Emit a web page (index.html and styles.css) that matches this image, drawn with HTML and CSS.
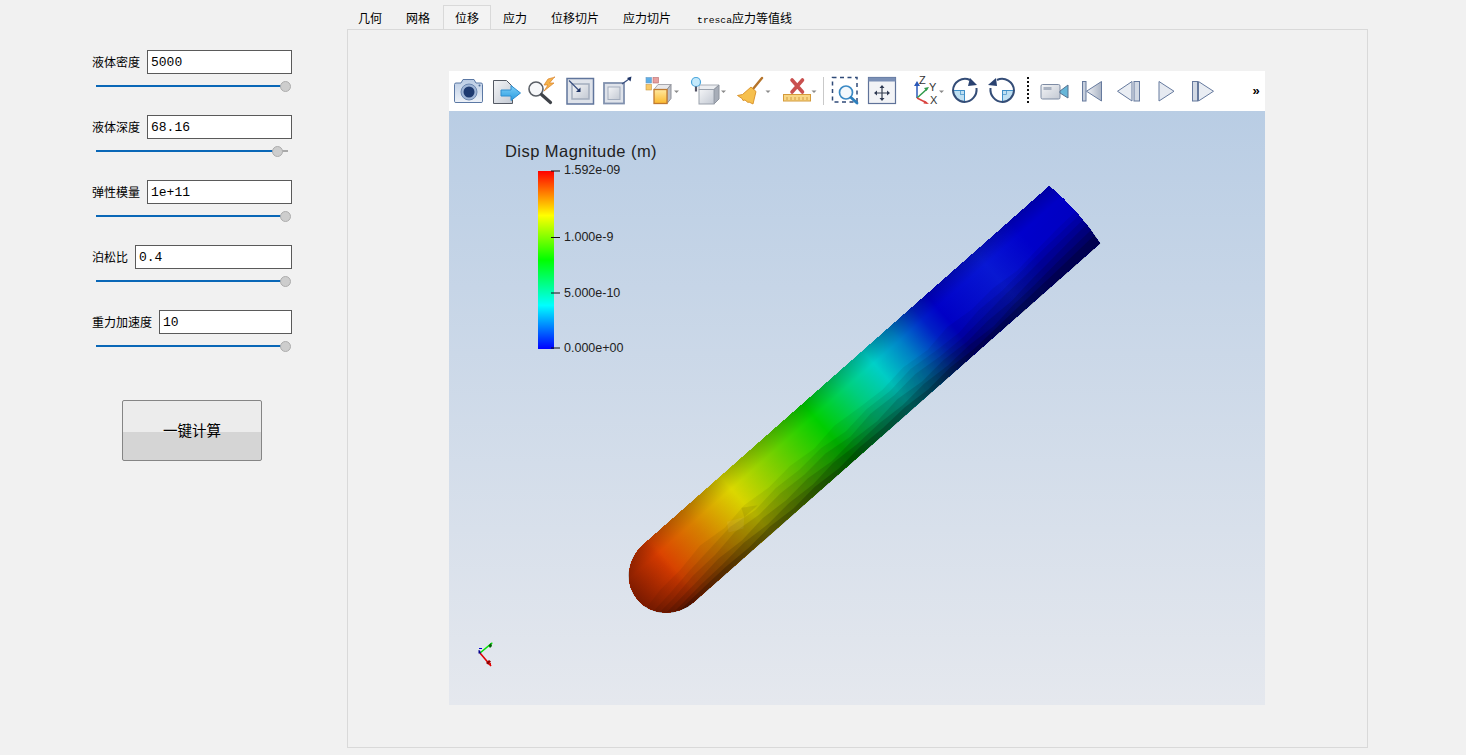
FILE: index.html
```html
<!DOCTYPE html>
<html lang="zh-CN">
<head>
<meta charset="utf-8">
<title>一键计算</title>
<link rel="stylesheet" href="styles.css">
</head>
<body>
<div class="app">
  <aside class="side">
    <div class="group">
      <div class="row"><label class="lbl">液体密度</label><div class="field">5000</div></div>
      <div class="slider"><div class="fill" style="width:189px"></div><div class="knob"></div></div>
    </div>
    <div class="group">
      <div class="row"><label class="lbl">液体深度</label><div class="field">68.16</div></div>
      <div class="slider"><div class="fill" style="width:181px"></div><div class="knob"></div></div>
    </div>
    <div class="group">
      <div class="row"><label class="lbl">弹性模量</label><div class="field">1e+11</div></div>
      <div class="slider"><div class="fill" style="width:189px"></div><div class="knob"></div></div>
    </div>
    <div class="group">
      <div class="row"><label class="lbl">泊松比</label><div class="field">0.4</div></div>
      <div class="slider"><div class="fill" style="width:189px"></div><div class="knob"></div></div>
    </div>
    <div class="group">
      <div class="row"><label class="lbl">重力加速度</label><div class="field">10</div></div>
      <div class="slider"><div class="fill" style="width:189px"></div><div class="knob"></div></div>
    </div>
    <button class="run"><span>一键计算</span></button>
  </aside>

  <main class="content">
    <nav class="tabs">
      <div class="tab">几何</div>
      <div class="tab">网格</div>
      <div class="tab active">位移</div>
      <div class="tab">应力</div>
      <div class="tab">位移切片</div>
      <div class="tab">应力切片</div>
      <div class="tab"><span class="mono">tresca</span>应力等值线</div>
    </nav>
    <section class="pane">
      <div class="viewer">
        <div class="toolbar">
          <svg class="ico" width="37" height="40" viewBox="451 71 37 40">
            <defs>
              <linearGradient id="gB" x1="0" y1="0" x2="0" y2="1"><stop offset="0" stop-color="#b9cbe4"/><stop offset="1" stop-color="#eef2f8"/></linearGradient>
              <linearGradient id="gG" x1="0" y1="0" x2="1" y2="1"><stop offset="0" stop-color="#f4f5f7"/><stop offset="1" stop-color="#c3c9d3"/></linearGradient>
              <linearGradient id="gA" x1="0" y1="0" x2="0" y2="1"><stop offset="0" stop-color="#7fd0f8"/><stop offset="1" stop-color="#2a9be0"/></linearGradient>
              <linearGradient id="gY" x1="0" y1="0" x2="0" y2="1"><stop offset="0" stop-color="#ffe9a0"/><stop offset="1" stop-color="#fbb92e"/></linearGradient>
              <linearGradient id="gT" x1="0" y1="0" x2="1" y2="0"><stop offset="0" stop-color="#f0f2f6"/><stop offset="1" stop-color="#a9b3c4"/></linearGradient>
            </defs>
            <path d="M456 83h5l2-3.500h11l2 3.500h5q1.500 0 1.500 1.500v17q0 1-1.500 1h-25q-1.500 0-1.500-1v-17q0-1.500 1.500-1.500z" fill="url(#gB)" stroke="#5b78a4"/>
            <circle cx="469" cy="92" r="8" fill="#9fb5d6" stroke="#6d88b0"/>
            <circle cx="469" cy="92" r="5.500" fill="#1e3a70"/>
            <circle cx="479.500" cy="85.500" r="1" fill="#4c6a96"/>
          </svg>
          <svg class="ico" width="37" height="40" viewBox="488 71 37 40">
            <path d="M493.500 80.500h13l6 6v17h-19z" fill="url(#gG)" stroke="#555a64"/>
            <path d="M501 90h10v-4.500l9.500 7.500-9.500 7.500v-4.500h-10z" fill="url(#gA)" stroke="#2f8ed0"/>
          </svg>
          <svg class="ico" width="37" height="40" viewBox="525 71 37 40">
            <circle cx="536" cy="89" r="7" fill="#f7f8fa" stroke="#5a5f66" stroke-width="1.600"/>
            <path d="M541.500 94.500l9 8" stroke="#3e4248" stroke-width="3.200" stroke-linecap="round"/>
            <path d="M555 77l-7 2-4 6h4l-4 6 10-8h-4.500l5-6z" fill="#f6b24a" stroke="#d9822a" stroke-width=".7"/>
          </svg>
          <svg class="ico" width="37" height="40" viewBox="562 71 37 40">
            <rect x="567" y="78.500" width="26.500" height="25.500" fill="#dfe3ea" stroke="#60759c" stroke-width="1.500"/>
            <rect x="572" y="84" width="17" height="15" fill="url(#gG)" stroke="#a3adbd" stroke-width="1.500"/>
            <path d="M569 80.500l10 10" stroke="#3a5080" stroke-width="1.200"/>
            <path d="M580.500 92v-4.500l-4.500 4.500z" fill="#1d3365"/>
          </svg>
          <svg class="ico" width="37" height="40" viewBox="599 71 37 40">
            <rect x="604" y="83" width="20" height="20.500" fill="#dfe3ea" stroke="#8191ae" stroke-width="1.800"/>
            <rect x="608" y="87" width="12" height="12.500" fill="url(#gG)" stroke="#a3adbd"/>
            <path d="M622 84l7-5" stroke="#3a5080" stroke-width="1.200"/>
            <path d="M631.500 76.500l-1 5-3.500-3.500z" fill="#1d3365"/>
          </svg>
          <svg class="ico" width="48" height="40" viewBox="636 71 48 40">
            <rect x="646" y="77.500" width="5.500" height="5.500" fill="#5eaee6" stroke="#6a9cc4" stroke-width=".6"/>
            <rect x="653" y="77.500" width="5.500" height="5.500" fill="#e7a0a0" stroke="#b96a6a" stroke-width=".6"/>
            <rect x="646" y="84.500" width="5.500" height="5.500" fill="#f7c96a" stroke="#cb9a42" stroke-width=".6"/>
            <path d="M658 84.500h13l-4 5h-13z" fill="#e8e8ea" stroke="#a8a8ae"/>
            <path d="M671 84.500v14l-4 5v-14z" fill="#b9bcc4" stroke="#8f929a"/>
            <rect x="654" y="89.500" width="13" height="14" fill="url(#gY)" stroke="#c07a30" stroke-width="1.300"/>
            <path class="drop" d="M674 90.500h5l-2.500 2.500z"/>
          </svg>
          <svg class="ico" width="46" height="40" viewBox="684 71 46 40">
            <path d="M699 85h20l-5 4.500h-15z" fill="#eceef1" stroke="#a9aeb7"/>
            <path d="M719 85v14l-5 5v-14.500z" fill="#a7adb8" stroke="#8e949f"/>
            <rect x="699" y="89.500" width="15" height="14.500" fill="url(#gG)" stroke="#9aa1ac"/>
            <circle cx="696" cy="82" r="4.500" fill="#c4e9fb" stroke="#4aa6dc" stroke-width="1.200"/>
            <path d="M696 86.500v5" stroke="#556" stroke-width="2.200"/>
            <path class="drop" d="M721 90.500h5l-2.500 2.500z"/>
          </svg>
          <svg class="ico" width="45" height="40" viewBox="730 71 45 40">
            <path d="M762 78l-9 11" stroke="#b5742a" stroke-width="2.400" stroke-linecap="round"/>
            <path d="M751 87l5 4.500-3 12.500-4-2-1 .5-3-2.500-2 .5-1-2-4.500-3 5-1z" fill="#f6c04e" stroke="#d88f24" stroke-width=".9"/>
            <path class="drop" d="M765.500 90.500h5l-2.500 2.500z"/>
          </svg>
          <svg class="ico" width="45" height="40" viewBox="775 71 45 40">
            <rect x="783.500" y="94.500" width="27" height="6.500" fill="#f8d684" stroke="#d49a3a"/>
            <path d="M787 97v3M791 97v3M795 97v3M799 97v3M803 97v3M807 97v3" stroke="#c98f38" stroke-width=".8"/>
            <path d="M792 80l10.500 12M802.500 80l-10.500 12" stroke="#c9504f" stroke-width="3.600" stroke-linecap="round"/>
            <path class="drop" d="M811.500 90.500h5l-2.500 2.500z"/>
          </svg>
          <div class="sep"></div>
          <svg class="ico" width="37" height="40" viewBox="826 71 37 40">
            <rect x="832.500" y="77.500" width="24.500" height="24.500" fill="none" stroke="#2f4a78" stroke-width="1.500" stroke-dasharray="4 3.500"/>
            <circle cx="846" cy="92.500" r="6.500" fill="#f3f8fc" stroke="#3a89c4" stroke-width="1.700"/>
            <path d="M851 97.500l6 5.500" stroke="#2c7fbd" stroke-width="2.800" stroke-linecap="round"/>
          </svg>
          <svg class="ico" width="37" height="40" viewBox="863 71 37 40">
            <rect x="868.500" y="77.500" width="27" height="26" fill="#f2f3f6" stroke="#5f7299" stroke-width="1.200"/>
            <rect x="868.500" y="77.500" width="27" height="4" fill="#7b90b6"/>
            <path d="M882 86v14M875 93h14" stroke="#333c4e" stroke-width="1.200"/>
            <path d="M882 85l-2.500 3h5zM882 101l-2.500-3h5zM874 93l3-2.500v5zM890 93l-3-2.500v5z" fill="#2f3a52"/>
          </svg>
          <svg class="ico" width="46" height="40" viewBox="900 71 46 40">
            <path d="M917 98v-14" stroke="#2a58b8" stroke-width="1.500"/>
            <path d="M917 81l-3 5h6z" fill="#2a58b8"/>
            <path d="M917 98l10-9" stroke="#2f9a4a" stroke-width="1.500"/>
            <path d="M929 87l-5 1 2.500 3z" fill="#2f9a4a"/>
            <path d="M917 98l10 5" stroke="#d9433f" stroke-width="1.500"/>
            <path d="M929 104l-4.500-3.500-1 3z" fill="#d9433f"/>
            <text class="axl" x="919" y="84">Z</text>
            <text class="axl" x="929" y="91">Y</text>
            <text class="axl" x="930" y="104">X</text>
            <path class="drop" d="M939 90.500h5l-2.500 2.500z"/>
          </svg>
          <svg class="ico" width="37" height="40" viewBox="946 71 37 40">
            <path d="M953 90.500h11.500v11.500a12 12 0 0 1-11.500-11.500z" fill="#bfe0f2"/>
            <path d="M953 90.500h11.500v11.500" fill="none" stroke="#3f8fc8" stroke-width="1"/>
            <rect x="960.500" y="90.500" width="4" height="4" fill="none" stroke="#3f8fc8" stroke-width=".7"/>
            <path d="M953 90.500a12 12 0 0 1 17-10.500M976.500 88a12.500 12.500 0 0 1-12 14a12 12 0 0 1-11.500-11.500" fill="none" stroke="#344d77" stroke-width="2"/>
            <path d="M977 85l-7-7-2 8z" fill="#2a4270"/>
          </svg>
          <svg class="ico" width="37" height="40" viewBox="983 71 37 40">
            <path d="M1014 90.500h-11.500v11.500a12 12 0 0 0 11.500-11.500z" fill="#bfe0f2"/>
            <path d="M1014 90.500h-11.500v11.500" fill="none" stroke="#3f8fc8" stroke-width="1"/>
            <rect x="1002.500" y="90.500" width="4" height="4" fill="none" stroke="#3f8fc8" stroke-width=".7"/>
            <path d="M1014 90.500a12 12 0 0 0-17-10.500M990.500 88a12.500 12.500 0 0 0 12 14a12 12 0 0 0 11.500-11.500" fill="none" stroke="#344d77" stroke-width="2"/>
            <path d="M988 85l8-7 1 8z" fill="#2a4270"/>
          </svg>
          <svg class="ico" width="16" height="40" viewBox="1020 71 16 40">
            <path d="M1028 77v26" stroke="#111" stroke-width="2" stroke-dasharray="2 2"/>
          </svg>
          <svg class="ico" width="37" height="40" viewBox="1036 71 37 40">
            <rect x="1041" y="84.500" width="19" height="14.500" rx="1.500" fill="url(#gG)" stroke="#7d8ba3"/>
            <rect x="1043.500" y="87" width="8" height="3" fill="#a9b2c1"/>
            <path d="M1060 91l8-6v13l-8-5z" fill="#66b6d8" stroke="#55718f"/>
          </svg>
          <svg class="ico" width="37" height="40" viewBox="1073 71 37 40">
            <rect x="1082.500" y="81.500" width="3.500" height="19.500" fill="#c7cfdc" stroke="#667a9e"/>
            <path d="M1101.500 81.500v19.500l-15-9.750z" fill="url(#gT)" stroke="#667a9e"/>
          </svg>
          <svg class="ico" width="38" height="40" viewBox="1110 71 38 40">
            <path d="M1132 81.500v19.500l-14.500-9.750z" fill="#e9edf3" stroke="#667a9e"/>
            <rect x="1134" y="81.500" width="5.500" height="19.500" fill="#d2d9e4" stroke="#667a9e"/>
          </svg>
          <svg class="ico" width="37" height="40" viewBox="1148 71 37 40">
            <path d="M1159 81.500v19.500l15-9.750z" fill="#e6eaf1" stroke="#667a9e"/>
          </svg>
          <svg class="ico" width="37" height="40" viewBox="1185 71 37 40">
            <rect x="1192.500" y="81.500" width="5" height="19.500" fill="#d2d9e4" stroke="#667a9e"/>
            <path d="M1198.500 81.500v19.500l15-9.750z" fill="#e9edf3" stroke="#667a9e"/>
          </svg>
          <div class="more">»</div>
        </div>

        <svg class="scene" width="816" height="594" viewBox="449 111 816 594">
          <defs>
            <linearGradient id="cbar" x1="0" y1="0" x2="0" y2="1">
              <stop offset="0" stop-color="#ff0000"/><stop offset=".25" stop-color="#ffff00"/>
              <stop offset=".5" stop-color="#00ff00"/><stop offset=".755" stop-color="#00ffff"/>
              <stop offset="1" stop-color="#0000ff"/>
            </linearGradient>
            <linearGradient id="along" gradientUnits="userSpaceOnUse" x1="-42" y1="0" x2="546" y2="0">
              <stop offset="0" stop-color="#e03000"/>
              <stop offset=".071" stop-color="#dc3c00"/>
              <stop offset=".156" stop-color="#d88000"/>
              <stop offset=".243" stop-color="#dcd800"/>
              <stop offset=".33" stop-color="#78d000"/>
              <stop offset=".43" stop-color="#00d000"/>
              <stop offset=".51" stop-color="#00d080"/>
              <stop offset=".566" stop-color="#00d0c8"/>
              <stop offset=".625" stop-color="#0080c8"/>
              <stop offset=".678" stop-color="#0020c8"/>
              <stop offset=".71" stop-color="#0000c8"/>
              <stop offset=".82" stop-color="#0818d4"/>
              <stop offset=".9" stop-color="#0000cc"/>
              <stop offset="1" stop-color="#0000c4"/>
            </linearGradient>
            <linearGradient id="across" gradientUnits="userSpaceOnUse" x1="0" y1="-39" x2="0" y2="39">
              <stop offset="0" stop-color="#000" stop-opacity=".18"/>
              <stop offset=".22" stop-color="#000" stop-opacity="0"/>
              <stop offset=".5" stop-color="#000" stop-opacity=".02"/>
              <stop offset="1" stop-color="#000" stop-opacity=".12"/>
            </linearGradient>
            <linearGradient id="capfade" gradientUnits="userSpaceOnUse" x1="-43" y1="0" x2="6" y2="0">
              <stop offset="0" stop-color="#000" stop-opacity=".45"/>
              <stop offset="1" stop-color="#000" stop-opacity="0"/>
            </linearGradient>
            <clipPath id="tubeclip"><path d="M-2-38.500H540Q546 0 540 38.500H-2A41 38.500 0 0 1 -2-38.500z"/></clipPath>
          </defs>

          <g transform="translate(670 572) rotate(-41.44)">
            <path class="edge" d="M-2-38.500H540Q546 0 540 38.500H-2A41 38.500 0 0 1 -2-38.500z" fill="url(#along)"/>
            <g clip-path="url(#tubeclip)">
              <rect x="-45" y="-45" width="600" height="90" fill="url(#across)"/>
              <path class="f1" d="M-45 12L-20 7 10 5 40 0 70 3 100 -1 130 2 160 0 190 3 220 -1 250 2 280 4 310 1 340 4 370 0 400 3 430 1 460 4 490 1 520 -1 550 -2V50H-45z"/>
              <path class="f2" d="M-45 19L-15 16 15 12 45 9 75 6 105 10 135 7 165 9 195 7 225 11 255 8 285 10 315 7 345 10 375 12 405 8 435 9 465 7 495 5 525 4 550 3V50H-45z"/>
              <path class="f3" d="M-45 24L-15 22 15 18 45 17 75 13 105 16 135 14 165 16 195 14 225 18 255 14 285 16 315 14 345 17 375 18 405 16 435 14 465 13 495 11 525 10 550 9V50H-45z"/>
              <path class="f4" d="M-45 29L-15 27 15 25 45 22 75 24 105 21 135 23 165 21 195 24 225 22 255 24 285 21 315 24 345 22 375 24 405 22 435 23 465 20 495 18 525 16 550 15V50H-45z"/>
              <path class="f5" d="M-45 34L-15 32 15 30 45 29 75 27 105 29 135 27 165 29 195 26 225 28 255 27 285 29 315 27 345 29 375 28 405 30 435 27 465 26 495 24 525 23 550 22V50H-45z"/>
              <path class="f6" d="M-45 37L-15 35 15 34 45 33 75 34 105 32 135 34 165 32 195 34 225 32 255 33 285 32 315 34 345 32 375 34 405 33 435 32 465 31 495 30 525 29 550 28V50H-45z"/>
              <path class="tri" d="M76 0L92 8 84 16 70 9z"/>
              <path class="tri2" d="M96 -1L110 8 92 8z"/>
              <rect x="-45" y="-45" width="51" height="90" fill="url(#capfade)"/>
            </g>
          </g>

          <text class="ct" x="505" y="157">Disp Magnitude (m)</text>
          <rect x="538" y="171" width="16" height="178" fill="url(#cbar)"/>
          <path d="M551 171h9M551 237.500h9M551 293h9M551 348h9" stroke="#111" stroke-width="1"/>
          <text class="cl" x="564" y="174">1.592e-09</text>
          <text class="cl" x="564" y="241">1.000e-9</text>
          <text class="cl" x="564" y="297">5.000e-10</text>
          <text class="cl" x="564" y="352">0.000e+00</text>

          <path d="M480 653l12-10" stroke="#00e000" stroke-width="1.600"/>
          <path d="M488.500 645.500l1.500 2.500 2-2-1-3z" fill="#006000"/>
          <path d="M492.500 642.500l-1.500.5 1 1.500z" fill="#00e000"/>
          <path d="M480 653l11 13" stroke="#e00000" stroke-width="1.600"/>
          <path d="M486 663l3-3 2 1.500-3 3z" fill="#900000"/>
          <path d="M491 662.500v3l-3-1z" fill="#e00000"/>
          <path d="M478.500 650v3.500l2.500 0-1-3z" fill="#000090"/>
          <path d="M479 648.500h3" stroke="#0000d0" stroke-width="1"/>
        </svg>
      </div>
    </section>
  </main>
</div>
</body>
</html>
```
FILE: styles.css
```css
* { box-sizing: border-box; }
html, body { margin: 0; height: 100%; overflow: hidden; }
body {
  background: #f1f1f1;
  font-family: "Noto Sans CJK SC", "Liberation Sans", sans-serif;
  color: #000;
}
.app { display: flex; height: 755px; }

.side { width: 347px; flex: none; padding: 50px 0 0 92px; }
.group { height: 65px; width: 200px; }
.row { display: flex; align-items: center; gap: 7px; height: 24px; }
.lbl { font-size: 12px; line-height: 24px; white-space: nowrap; flex: none; }
.field {
  flex: 1;
  height: 24px;
  background: #fff;
  border: 1px solid #5a5a5a;
  font: 13px/24px "Liberation Mono", monospace;
  padding-left: 3px;
  color: #000;
}
.slider {
  position: relative;
  width: 192px;
  height: 2px;
  margin: 11px 0 0 4px;
  background: #a9a9a9;
}
.fill { height: 2px; background: #0a67b7; }
.knob {
  position: absolute;
  left: 100%;
  top: -4px;
  width: 11px;
  height: 11px;
  border-radius: 50%;
  background: #cdcdcd;
  border: 1px solid #adadad;
}
.group:nth-child(1) .knob, .group:nth-child(3) .knob,
.group:nth-child(4) .knob, .group:nth-child(5) .knob { margin-left: -8px; }
.group:nth-child(2) .knob { margin-left: -16px; }

.run {
  display: flex;
  align-items: center;
  justify-content: center;
  width: 140px;
  height: 61px;
  margin: 25px 0 0 30px;
  padding: 0 0 3px;
  border: 1px solid #858585;
  border-radius: 2px;
  background: linear-gradient(#ececec 0 31px, #d5d5d5 31px);
  font: 14.500px "Noto Sans CJK SC", sans-serif;
  color: #000;
}

.content { flex: none; width: 1021px; display: flex; flex-direction: column; }
.tabs { display: flex; height: 29px; padding-top: 5px; margin-left: -1px; font-size: 12px; }
.tab {
  padding: 0 11px;
  line-height: 24px;
  height: 24px;
  white-space: nowrap;
  border: 1px solid transparent;
  border-bottom: 0;
}
.tab:nth-child(2) { padding-right: 12px; }
.tab:nth-child(7) { padding-left: 13px; }
.tab.active { border-color: #d9d9d9; background: #f3f3f3; }
.mono { font: 9.700px "Liberation Mono", monospace; }

.pane {
  width: 1021px;
  height: 719px;
  border: 1px solid #d9d9d9;
  padding: 41px 0 0 101px;
}
.viewer { width: 816px; }
.toolbar {
  display: flex;
  align-items: center;
  height: 40px;
  padding-left: 2px;
  background: #fff;
}
.ico { flex: none; display: block; }
.drop { fill: #8a8a8a; }
.sep { flex: none; width: 1px; height: 28px; background: #c9c9c9; margin: 0 2px 0 3px; }
.axl { font: 11px "Liberation Sans", sans-serif; fill: #333; }
.more { margin-left: auto; margin-right: 2px; font: bold 13px/40px "Liberation Sans", sans-serif; width: 14px; text-align: center; }

.scene {
  display: block;
  background: linear-gradient(#b9cde4, #e5e8ee);
}
.edge { shape-rendering: crispEdges; }
.ct { font: 16.500px "Liberation Sans", sans-serif; letter-spacing: .45px; fill: #222; }
.cl { font: 12.500px "Liberation Sans", sans-serif; fill: #222; }
.f1 { fill: #000; fill-opacity: .06; }
.f2 { fill: #000; fill-opacity: .08; }
.f3 { fill: #000; fill-opacity: .1; }
.f4 { fill: #000; fill-opacity: .13; }
.f5 { fill: #000; fill-opacity: .16; }
.f6 { fill: #000; fill-opacity: .2; }
.tri { fill: #fff; fill-opacity: .06; }
.tri2 { fill: #000; fill-opacity: .08; }
```
